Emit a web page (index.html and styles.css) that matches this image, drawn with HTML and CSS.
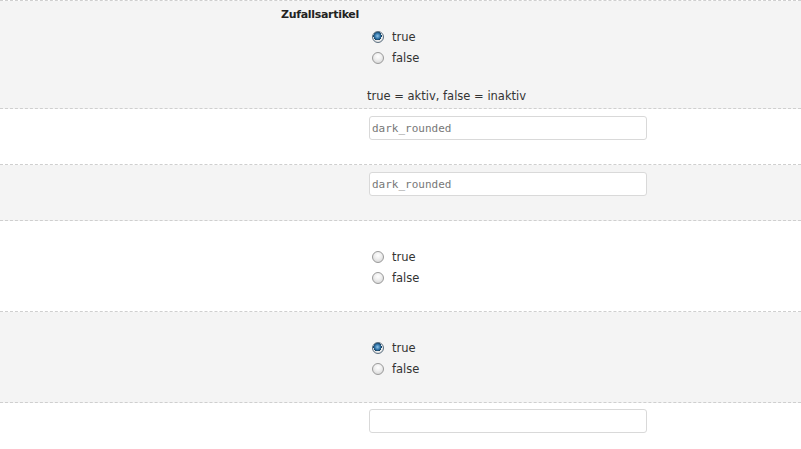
FILE: index.html
```html
<!DOCTYPE html>
<html lang="de">
<head>
<meta charset="utf-8">
<title>Parameter</title>
<link rel="stylesheet" href="styles.css">
</head>
<body>
<div class="form">
  <div class="field field-first shaded">
    <label class="field-label">Zufallsartikel</label>
    <div class="control control-below">
      <label class="option"><input type="radio" name="rand" checked><span>true</span></label>
      <label class="option"><input type="radio" name="rand"><span>false</span></label>
      <p class="desc">true = aktiv, false = inaktiv</p>
    </div>
  </div>
  <div class="field field-input">
    <div class="control"><input class="text" type="text" value="dark_rounded"></div>
  </div>
  <div class="field field-input shaded">
    <div class="control"><input class="text" type="text" value="dark_rounded"></div>
  </div>
  <div class="field field-radio">
    <div class="control">
      <label class="option"><input type="radio" name="r2"><span>true</span></label>
      <label class="option"><input type="radio" name="r2"><span>false</span></label>
    </div>
  </div>
  <div class="field field-radio shaded">
    <div class="control">
      <label class="option"><input type="radio" name="r3" checked><span>true</span></label>
      <label class="option"><input type="radio" name="r3"><span>false</span></label>
    </div>
  </div>
  <div class="field field-input field-last">
    <div class="control"><input class="text" type="text" value=""></div>
  </div>
</div>
</body>
</html>
```
FILE: styles.css
```css
html, body {
  margin: 0;
  padding: 0;
  background: #ffffff;
}
body {
  font-family: "DejaVu Sans", Verdana, sans-serif;
  font-size: 11.5px;
  color: #333333;
}
.form {
  border-top: 1px dashed #cfcfcf;
}
.field {
  display: grid;
  grid-template-columns: 367px 1fr;
  align-content: start;
  border-bottom: 1px dashed #cfcfcf;
}
.shaded {
  background: #f4f4f4;
}
.field-label {
  grid-column: 1;
  grid-row: 1;
  text-align: right;
  padding-right: 8px;
  margin-bottom: 2px;
  font-weight: bold;
  font-size: 11px;
  letter-spacing: -0.3px;
  line-height: 21px;
  color: #222222;
}
.control {
  grid-column: 2;
}
.control-below {
  grid-row: 2;
}
.field-first {
  padding: 3px 0 1px;
}
.option {
  display: flex;
  align-items: center;
  height: 21px;
}
.option span {
  line-height: 21px;
}
.option input {
  appearance: none;
  -webkit-appearance: none;
  width: 12px;
  height: 12px;
  margin: 0 8px 0 5px;
  border-radius: 50%;
  border: 1px solid #9a9a9a;
  background: radial-gradient(circle at 50% 35%, #ffffff 0%, #f0f0f0 40%, #cfcfcf 100%);
  box-sizing: border-box;
  position: relative;
  top: -1px;
}
.option input:checked {
  border-color: #5b6f80;
  background:
    radial-gradient(circle at 45% 40%, #8fc4e8 0%, #2a6ea3 35%, #16405f 50%, transparent 52%),
    radial-gradient(circle at 50% 35%, #ffffff 0%, #eeeeee 60%, #cfcfcf 100%);
}
.desc {
  margin: 17px 0 0 0;
  line-height: 21px;
}
.field-input {
  padding: 7px 0 24px;
}
.field-last {
  border-bottom: none;
  padding: 6px 0 17px;
}
.text {
  display: block;
  margin: 0 0 0 2px;
  width: 278px;
  height: 24px;
  box-sizing: border-box;
  border: 1px solid #d9d9d9;
  border-radius: 3px;
  padding: 0 2px;
  background: #ffffff;
  font-family: "DejaVu Sans Mono", "Liberation Mono", monospace;
  font-size: 11px;
  color: #777777;
  outline: none;
}
.field-radio {
  padding: 26px 0 22px;
}
```
